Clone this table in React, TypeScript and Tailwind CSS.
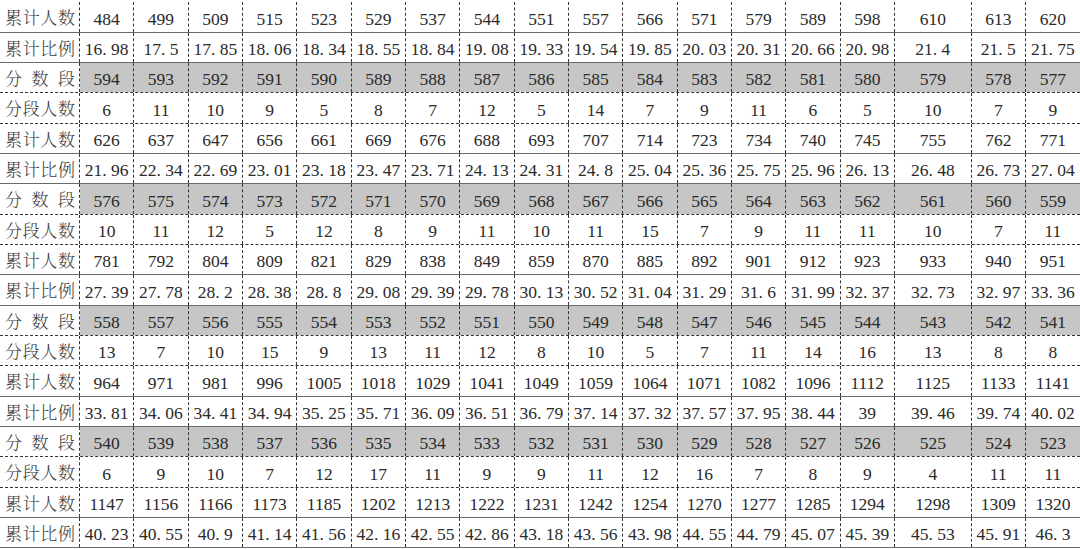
import React from "react";

type Row = { label: string; kind: "seg" | "cnt" | "cum" | "pct"; values: (string | number)[] };

const groups = [
  {
    start: 594,
    cnt: [6, 11, 10, 9, 5, 8, 7, 12, 5, 14, 7, 9, 11, 6, 5, 10, 7, 9],
    cum: [626, 637, 647, 656, 661, 669, 676, 688, 693, 707, 714, 723, 734, 740, 745, 755, 762, 771],
    pct: ["21.96", "22.34", "22.69", "23.01", "23.18", "23.47", "23.71", "24.13", "24.31", "24.8", "25.04", "25.36", "25.75", "25.96", "26.13", "26.48", "26.73", "27.04"],
  },
  {
    start: 576,
    cnt: [10, 11, 12, 5, 12, 8, 9, 11, 10, 11, 15, 7, 9, 11, 11, 10, 7, 11],
    cum: [781, 792, 804, 809, 821, 829, 838, 849, 859, 870, 885, 892, 901, 912, 923, 933, 940, 951],
    pct: ["27.39", "27.78", "28.2", "28.38", "28.8", "29.08", "29.39", "29.78", "30.13", "30.52", "31.04", "31.29", "31.6", "31.99", "32.37", "32.73", "32.97", "33.36"],
  },
  {
    start: 558,
    cnt: [13, 7, 10, 15, 9, 13, 11, 12, 8, 10, 5, 7, 11, 14, 16, 13, 8, 8],
    cum: [964, 971, 981, 996, 1005, 1018, 1029, 1041, 1049, 1059, 1064, 1071, 1082, 1096, 1112, 1125, 1133, 1141],
    pct: ["33.81", "34.06", "34.41", "34.94", "35.25", "35.71", "36.09", "36.51", "36.79", "37.14", "37.32", "37.57", "37.95", "38.44", "39", "39.46", "39.74", "40.02"],
  },
  {
    start: 540,
    cnt: [6, 9, 10, 7, 12, 17, 11, 9, 9, 11, 12, 16, 7, 8, 9, 4, 11, 11],
    cum: [1147, 1156, 1166, 1173, 1185, 1202, 1213, 1222, 1231, 1242, 1254, 1270, 1277, 1285, 1294, 1298, 1309, 1320],
    pct: ["40.23", "40.55", "40.9", "41.14", "41.56", "42.16", "42.55", "42.86", "43.18", "43.56", "43.98", "44.55", "44.79", "45.07", "45.39", "45.53", "45.91", "46.3"],
  },
];

const rows: Row[] = [
  { label: "累计人数", kind: "cum", values: [484, 499, 509, 515, 523, 529, 537, 544, 551, 557, 566, 571, 579, 589, 598, 610, 613, 620] },
  { label: "累计比例", kind: "pct", values: ["16.98", "17.5", "17.85", "18.06", "18.34", "18.55", "18.84", "19.08", "19.33", "19.54", "19.85", "20.03", "20.31", "20.66", "20.98", "21.4", "21.5", "21.75"] },
];
groups.forEach((g) => {
  rows.push({ label: "分数段", kind: "seg", values: Array.from({ length: 18 }, (_, i) => g.start - i) });
  rows.push({ label: "分段人数", kind: "cnt", values: g.cnt });
  rows.push({ label: "累计人数", kind: "cum", values: g.cum });
  rows.push({ label: "累计比例", kind: "pct", values: g.pct });
});

const colW = [
  "w-[54.33px]", "w-[54.33px]", "w-[54.33px]", "w-[54.33px]", "w-[54.33px]",
  "w-[54.33px]", "w-[54.33px]", "w-[54.33px]", "w-[54.33px]", "w-[54.34px]",
  "w-[54.33px]", "w-[54.33px]", "w-[54.33px]", "w-[54.33px]", "w-[54.34px]",
  "w-[76.7px]", "w-[54.3px]", "w-[54px]",
];

function Num({ v }: { v: string | number }) {
  const s = String(v);
  const i = s.indexOf(".");
  if (i < 0) return <span>{s}</span>;
  return (
    <span>
      {s.slice(0, i)}
      <span className="inline-block w-[0.5em] text-left">.</span>
      {s.slice(i + 1)}
    </span>
  );
}

export default function App() {
  return (
    <div
      className="w-[1080px] h-[549px] overflow-hidden bg-white pt-[2.3px] text-[#2a2a2a] text-[17.5px] leading-none"
      style={{ fontFamily: '"Liberation Serif", "Noto Serif CJK SC", "Noto Sans CJK SC", serif' }}
    >
      {rows.map((r, ri) => {
        const solid = r.kind === "cum" || r.kind === "pct";
        return (
          <div
            key={ri}
            className={
              "flex h-[30.33px] border-b " +
              (solid ? "border-solid border-[#6a6a6a]" : "border-dashed border-[#333]")
            }
          >
            <div className="w-[80px] shrink-0 h-full border-r border-dashed border-[#333] pl-[5px] pr-[4px] pt-[4px] flex items-center whitespace-nowrap">
              <div className="flex w-full justify-between text-[17px] font-light text-[#3a3a3a]">
                {Array.from(r.label).map((ch, k) => (
                  <span key={k}>{ch}</span>
                ))}
              </div>
            </div>
            {r.values.map((v, ci) => (
              <div
                key={ci}
                className={
                  colW[ci] +
                  " shrink-0 h-full flex items-center justify-center pt-[5px] whitespace-nowrap " +
                  (ci < 17 ? "border-r border-dashed border-[#333] " : "") +
                  (r.kind === "seg" ? "bg-[#c6c6c6]" : "bg-white")
                }
              >
                <Num v={v} />
              </div>
            ))}
          </div>
        );
      })}
    </div>
  );
}
